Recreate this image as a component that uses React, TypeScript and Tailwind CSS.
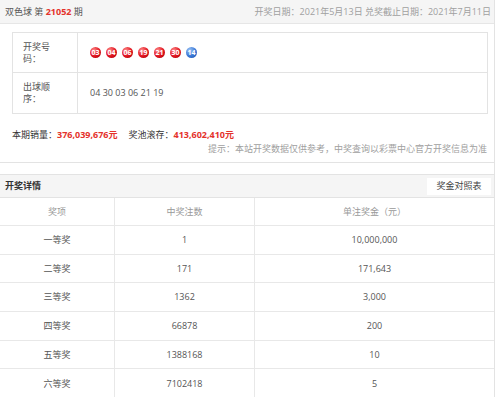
import React from 'react';

const RED_BALLS = ['03', '04', '06', '19', '21', '30'];
const BLUE_BALL = '14';

const PRIZES = [
  { name: '一等奖', count: '1', amount: '10,000,000' },
  { name: '二等奖', count: '171', amount: '171,643' },
  { name: '三等奖', count: '1362', amount: '3,000' },
  { name: '四等奖', count: '66878', amount: '200' },
  { name: '五等奖', count: '1388168', amount: '10' },
  { name: '六等奖', count: '7102418', amount: '5' },
];

const Ball: React.FC<{ num: string; blue?: boolean }> = ({ num, blue }) => (
  <span
    className={
      'flex h-[11px] w-[11px] items-center justify-center rounded-full text-[7px] font-bold leading-none text-white ' +
      (blue
        ? 'bg-[radial-gradient(circle_at_35%_30%,#9cc4f5_0%,#3a78d6_55%,#1f4fa8_100%)]'
        : 'bg-[radial-gradient(circle_at_35%_30%,#ff8a8a_0%,#e0141e_55%,#a50008_100%)]')
    }
  >
    {num}
  </span>
);

const App: React.FC = () => {
  return (
    <div className="min-h-screen bg-white">
      <div className="w-[495px] border-r border-[#e3e3e3] font-['Open_Sans','Noto_Sans_CJK_SC',sans-serif] text-[9px] text-[#444]">
        {/* top panel */}
        <section className="border-b border-[#e3e3e3] pb-[7px]">
          <div className="flex h-[24px] items-center justify-between border-b border-[#e6e6e6] bg-[#f5f5f5] pl-[5px] pr-[3px]">
            <div className="text-[#555]">
              双色球 第 <span className="font-bold text-[#e4322b]">21052</span> 期
            </div>
            <div className="text-[#a0a0a0]">开奖日期：2021年5月13日 兑奖截止日期：2021年7月11日</div>
          </div>

          <div className="mx-[12px] mt-[8px] w-[476px] border border-[#e3e3e3]">
            <div className="flex h-[40px] border-b border-[#e3e3e3]">
              <div className="w-[65px] border-r border-[#e3e3e3] pl-[10px] pt-[8px] leading-[12px] text-[#555]">
                开奖号
                <br />
                码：
              </div>
              <div className="flex items-center gap-[5px] pl-[12px]">
                {RED_BALLS.map((n) => (
                  <Ball key={n} num={n} />
                ))}
                <Ball num={BLUE_BALL} blue />
              </div>
            </div>
            <div className="flex h-[40px]">
              <div className="w-[65px] border-r border-[#e3e3e3] pl-[10px] pt-[8px] leading-[12px] text-[#555]">
                出球顺
                <br />
                序：
              </div>
              <div className="flex items-center pl-[12px] text-[#555]">04 30 03 06 21 19</div>
            </div>
          </div>

          <div className="mt-[14px] flex h-[14px] items-center pl-[12px] text-[#333]">
            本期销量：<span className="font-bold text-[#e4322b]">376,039,676元</span>
            <span className="ml-[11px]">奖池滚存：</span>
            <span className="font-bold text-[#e4322b]">413,602,410元</span>
          </div>
          <div className="flex h-[13px] items-center justify-end pr-[7px] text-[#a0a0a0]">
            提示：本站开奖数据仅供参考，中奖查询以彩票中心官方开奖信息为准
          </div>
        </section>

        {/* detail section */}
        <section className="mt-[11px]">
          <div className="flex h-[24px] items-center justify-between border-y border-[#e3e3e3] bg-[#f5f5f5] pl-[5px] pr-[3px]">
            <span className="font-bold text-[#333]">开奖详情</span>
            <span className="flex h-[17px] w-[64px] items-center justify-center bg-white text-[#444]">奖金对照表</span>
          </div>

          <div className="grid grid-cols-[115px_140px_1fr] text-center">
            <div className="flex h-[28px] items-center justify-center border-b border-r border-[#e8e8e8] text-[#999]">奖项</div>
            <div className="flex h-[28px] items-center justify-center border-b border-r border-[#e8e8e8] text-[#999]">中奖注数</div>
            <div className="flex h-[28px] items-center justify-center border-b border-[#e8e8e8] text-[#999]">单注奖金（元）</div>
            {PRIZES.map((p) => (
              <React.Fragment key={p.name}>
                <div className="flex h-[28.7px] items-center justify-center border-b border-r border-[#e8e8e8] text-[#555]">{p.name}</div>
                <div className="flex h-[28.7px] items-center justify-center border-b border-r border-[#e8e8e8] text-[#555]">{p.count}</div>
                <div className="flex h-[28.7px] items-center justify-center border-b border-[#e8e8e8] text-[#555]">{p.amount}</div>
              </React.Fragment>
            ))}
          </div>
        </section>
      </div>
    </div>
  );
};

export default App;
